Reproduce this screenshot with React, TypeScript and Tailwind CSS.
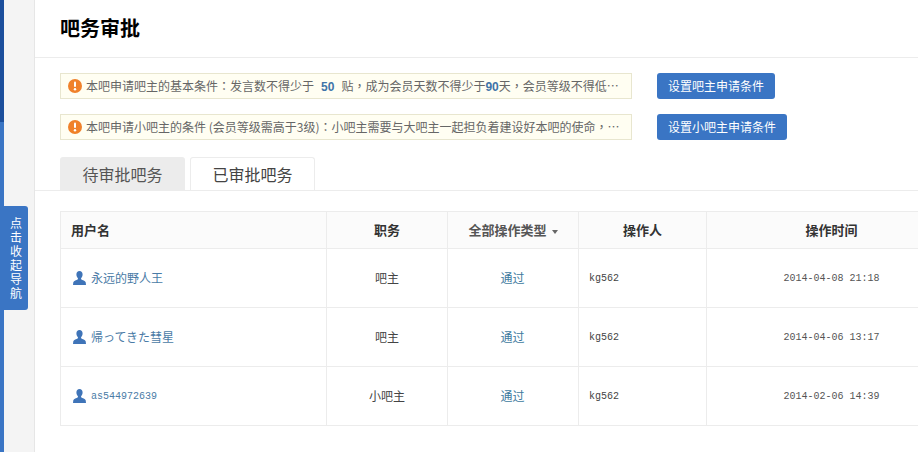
const rows = [
  { user: "永远的野人王", role: "吧主", op: "kg562", time: "2014-04-08 21:18" },
  { user: "帰ってきた彗星", role: "吧主", op: "kg562", time: "2014-04-06 13:17" },
  { user: "as544972639", role: "小吧主", op: "kg562", time: "2014-02-06 14:39" },
]

function WarnIcon() {
  return (
    <svg width="14" height="14" viewBox="0 0 14 14" className="shrink-0">
      <circle cx="7" cy="7" r="7" fill="#f0812a" />
      <rect x="6" y="2.5" width="2" height="5.5" rx="1" fill="#fff" />
      <circle cx="7" cy="10.2" r="1.2" fill="#fff" />
    </svg>
  )
}

function UserIcon() {
  return (
    <svg width="13" height="14" viewBox="0 0 13 14" className="shrink-0">
      <path
        d="M6.5 0C4.6 0 3.4 1.4 3.4 3.4c0 1.5.6 2.8 1.5 3.6v1.2C3.4 9.300.9 9.700.3 11.300L0 14h13l-.3-2.700c-.6-1.600-3.100-2-4.600-3.100V7c.9-.8 1.500-2.100 1.500-3.600C9.600 1.400 8.400 0 6.500 0z"
        fill="#3f74b8"
      />
    </svg>
  )
}

function Notice({ children }: { children: React.ReactNode }) {
  return (
    <div className="flex items-center w-[572px] h-[26px] pl-[7px] pr-[8px] border border-[#e8e6cf] bg-[#fffef2] text-[#666] text-[12px] font-['Noto_Sans_CJK_TC','Liberation_Sans',sans-serif]">
      <WarnIcon />
      <p lang="zh-TW" className="ml-[4px] truncate leading-[24px]">{children}</p>
    </div>
  )
}

export default function App() {
  return (
    <div
      lang="zh-CN"
      className="flex w-[918px] h-[452px] overflow-hidden bg-white font-['Noto_Sans_CJK_SC','Liberation_Sans',sans-serif]"
    >
      <aside className="relative flex w-[35px] shrink-0 border-r border-[#e6e6e6] bg-[#f4f4f4]">
        <div className="flex flex-col w-[4px]">
          <div className="h-[122px] bg-[#1c4f9c]" />
          <div className="flex-1 bg-[#3a75c4]" />
        </div>
        <div className="absolute left-[4px] top-[206px] flex flex-col items-center justify-center w-[24px] h-[104px] rounded-r-[3px] bg-[#3a75c4] text-white text-[12px] leading-[14px]">
          {"点击收起导航".split("").map((c) => (
            <span key={c}>{c}</span>
          ))}
        </div>
      </aside>

      <main className="flex-1 min-w-0">
        <header className="h-[58px] pl-[25px] pt-[14px] border-b border-[#ececec]">
          <h1 className="text-[20px] leading-[28px] font-bold text-black">吧务审批</h1>
        </header>

        <div className="flex flex-col gap-[15px] pl-[25px] pt-[15px]">
          <div className="flex items-center gap-[25px]">
            <Notice>
              本吧申请吧主的基本条件：发言数不得少于
              <b className="mx-[7px] text-[#3f74a8] font-['Liberation_Sans',sans-serif]">50</b>
              贴，成为会员天数不得少于
              <b className="text-[#3f74a8] font-['Liberation_Sans',sans-serif]">90</b>
              天，会员等级不得低于3级，并且需要通过审核
            </Notice>
            <button className="h-[26px] px-[11px] rounded-[3px] bg-[#3a75c4] text-white text-[12px]">
              设置吧主申请条件
            </button>
          </div>
          <div className="flex items-center gap-[25px]">
            <Notice>本吧申请小吧主的条件 (会员等级需高于3级)：小吧主需要与大吧主一起担负着建设好本吧的使命，并且维护好吧内秩序</Notice>
            <button className="h-[26px] px-[11px] rounded-[3px] bg-[#3a75c4] text-white text-[12px]">
              设置小吧主申请条件
            </button>
          </div>
        </div>

        <div className="flex gap-[5px] h-[34px] mt-[17px] pl-[25px] border-b border-[#ececec]">
          <div className="flex items-center justify-center w-[125px] h-[33px] bg-[#ececec] rounded-t-[3px] text-[16px] text-[#555]">
            待审批吧务
          </div>
          <div className="flex items-center justify-center w-[125px] h-[33px] bg-white border border-b-0 border-[#ececec] rounded-t-[3px] text-[16px] text-[#444]">
            已审批吧务
          </div>
        </div>

        <div className="pl-[25px] pt-[20px]">
          <table className="table-fixed w-[896px] border-collapse text-[12px] text-[#444]">
            <colgroup>
              <col className="w-[266px]" />
              <col className="w-[121px]" />
              <col className="w-[131px]" />
              <col className="w-[128px]" />
              <col className="w-[250px]" />
            </colgroup>
            <thead>
              <tr className="h-[37px] bg-[#fbfbfb] text-[#333] text-[13px] font-bold">
                <th className="border border-[#ececec] pl-[10px] text-left font-bold">用户名</th>
                <th className="border border-[#ececec] font-bold">职务</th>
                <th className="border border-[#ececec] font-bold text-[#555]">
                  全部操作类型
                  <span className="inline-block ml-[5px] align-middle w-0 h-0 border-x-[3px] border-t-[4px] border-x-transparent border-t-[#666]" />
                </th>
                <th className="border border-[#ececec] font-bold">操作人</th>
                <th className="border border-[#ececec] font-bold">操作时间</th>
              </tr>
            </thead>
            <tbody>
              {rows.map((r) => (
                <tr key={r.time} className="h-[59px]">
                  <td className="border border-[#ececec] pl-[12px]">
                    <div className="flex items-center gap-[5px] text-[#4a7ba6]">
                      <UserIcon />
                      {r.user.startsWith("as") ? (
                        <span className="font-['Liberation_Mono',monospace] text-[10px]">{r.user}</span>
                      ) : (
                        <span className="font-['Noto_Sans_CJK_JP','Noto_Sans_CJK_SC',sans-serif]">{r.user}</span>
                      )}
                    </div>
                  </td>
                  <td className="border border-[#ececec] text-center">{r.role}</td>
                  <td className="border border-[#ececec] pr-[1px] text-center text-[#3d7a9e]">通过</td>
                  <td className="border border-[#ececec] pl-[10px] font-['Liberation_Mono',monospace] text-[10px]">{r.op}</td>
                  <td className="border border-[#ececec] text-center font-['Liberation_Mono',monospace] text-[10px] text-[#555]">{r.time}</td>
                </tr>
              ))}
            </tbody>
          </table>
        </div>
      </main>
    </div>
  )
}
